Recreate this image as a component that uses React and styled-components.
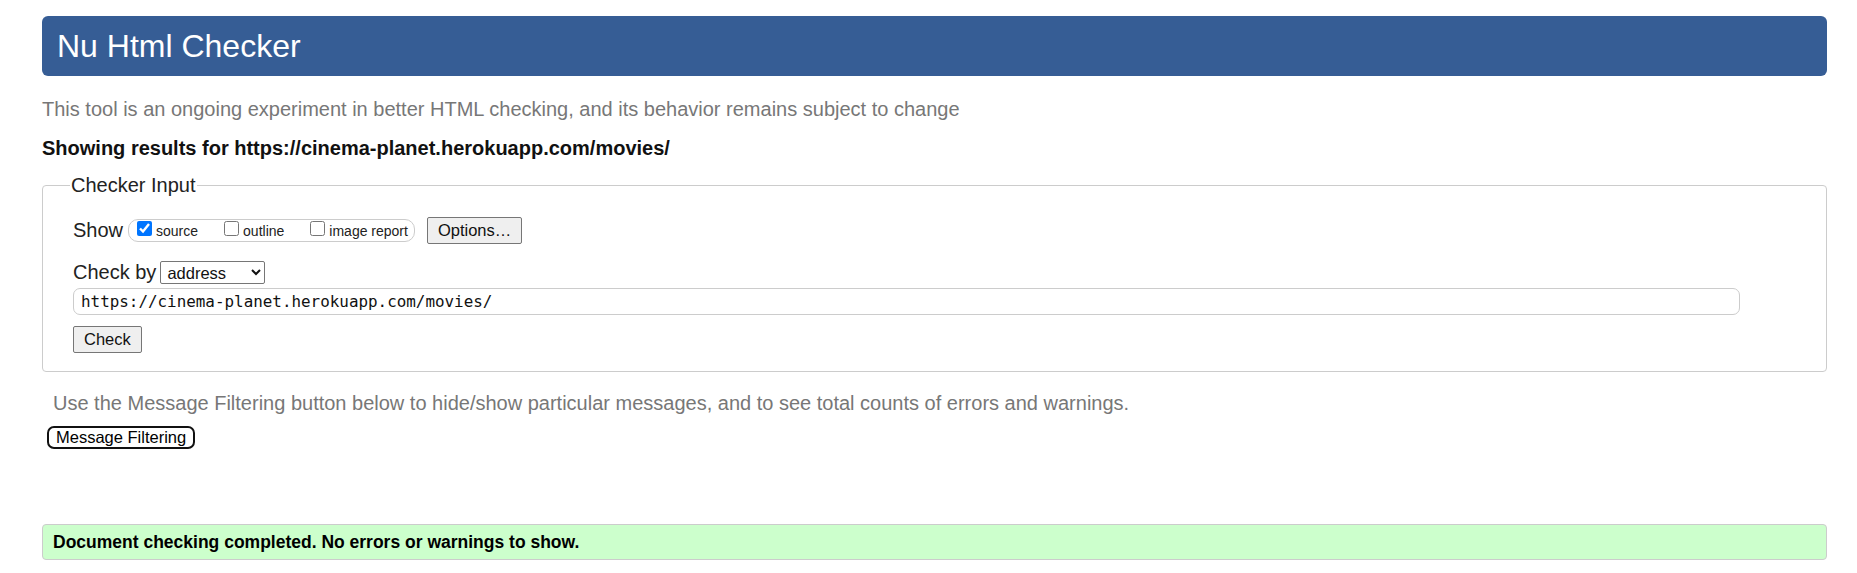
import React from "react";
import styled, { createGlobalStyle } from "styled-components";

const Global = createGlobalStyle`
  html, body { margin: 0; padding: 0; background: #fff; }
  body { font-family: "Liberation Sans", Arial, sans-serif; color: #222; }
`;

const Page = styled.main`
  padding: 16px 30px 12px 42px;
`;

const Title = styled.h1`
  margin: 0;
  height: 60px;
  padding: 0 15px;
  display: flex;
  align-items: center;
  background: #365d95;
  color: #fff;
  border-radius: 6px;
  font-size: 32px;
  font-weight: normal;
`;

const Note = styled.p`
  margin: ${(p) => p.$mt || 0}px 0 0 ${(p) => p.$ml || 0}px;
  font-size: 20px;
  line-height: 23px;
  color: #777;
`;

const Results = styled.p`
  margin: 16px 0 0;
  font-size: 20px;
  line-height: 23px;
  font-weight: bold;
  color: #111;
`;

const Fieldset = styled.fieldset`
  margin: 14px 0 0;
  padding: 20px 30px 18px;
  border: 1px solid #ccc;
  border-radius: 4px;
  min-width: 0;
`;

const Legend = styled.legend`
  padding: 0 1px;
  margin-left: -3px;
  font-size: 20px;
  line-height: 23px;
  color: #222;
`;

const Row = styled.div`
  display: flex;
  align-items: center;
  margin-top: ${(p) => p.$mt || 0}px;
  font-size: 20px;
  line-height: 23px;
`;

const RowLabel = styled.span`
  color: #222;
  margin-right: ${(p) => p.$mr || 4}px;
`;

const Pill = styled.span`
  display: inline-flex;
  align-items: center;
  height: 23px;
  box-sizing: border-box;
  padding: 0 6px 0 8px;
  border: 1px solid #ccc;
  border-radius: 10px;
  gap: 26px;
`;

const Choice = styled.label`
  display: inline-flex;
  align-items: center;
  gap: 4px;
  font-size: 14px;
  line-height: 16px;
  color: #222;
`;

const Box = styled.input`
  width: 15px;
  height: 15px;
  margin: 0 0 4px 0;
  accent-color: #0075ff;
`;

const Button = styled.button`
  font-family: "Liberation Sans", Arial, sans-serif;
  font-size: 16.5px;
  height: 27px;
  padding: 0 10px;
  margin-left: ${(p) => p.$ml || 0}px;
  margin-top: ${(p) => p.$mt || 0}px;
  background: #efefef;
  color: #111;
  border: 1px solid #767676;
  border-radius: 2px;
`;

const FilterButton = styled.button`
  display: block;
  font-family: "Liberation Sans", Arial, sans-serif;
  font-size: 16.5px;
  height: 23px;
  padding: 0 7px;
  margin: 11px 0 0 5px;
  background: #fff;
  color: #000;
  border: 2px solid #111;
  border-radius: 7px;
`;

const Select = styled.select`
  font-family: "Liberation Sans", Arial, sans-serif;
  font-size: 16.5px;
  width: 105px;
  height: 23px;
  padding: 0 2px;
  color: #111;
  background: #fff;
  border: 1px solid #767676;
  border-radius: 2px;
`;

const UrlInput = styled.input`
  display: block;
  box-sizing: border-box;
  width: 1667px;
  height: 27px;
  margin-top: 4px;
  padding: 0 7px;
  border: 1px solid #ccc;
  border-radius: 7px;
  font-family: "DejaVu Sans Mono", "Liberation Mono", monospace;
  font-size: 15.9px;
  color: #111;
  outline: none;
`;

const Success = styled.div`
  margin-top: 75px;
  height: 36px;
  box-sizing: border-box;
  display: flex;
  align-items: center;
  padding: 0 10px;
  background: #ccffcc;
  border: 1px solid #ccc;
  border-radius: 4px;
  font-size: 17.5px;
  font-weight: bold;
  color: #000;
`;

export default function App() {
  return (
    <>
      <Global />
      <Page>
        <Title>Nu Html Checker</Title>
        <Note $mt={22}>
          This tool is an ongoing experiment in better HTML checking, and its
          behavior remains subject to change
        </Note>
        <Results>
          Showing results for https://cinema-planet.herokuapp.com/movies/
        </Results>
        <Fieldset>
          <Legend>Checker Input</Legend>
          <Row>
            <RowLabel $mr={5}>Show</RowLabel>
            <Pill>
              <Choice>
                <Box type="checkbox" defaultChecked />
                source
              </Choice>
              <Choice>
                <Box type="checkbox" />
                outline
              </Choice>
              <Choice>
                <Box type="checkbox" />
                image report
              </Choice>
            </Pill>
            <Button $ml={12}>Options…</Button>
          </Row>
          <Row $mt={17}>
            <RowLabel>Check by</RowLabel>
            <Select defaultValue="address">
              <option value="address">address</option>
              <option value="file">file upload</option>
              <option value="text">text input</option>
            </Select>
          </Row>
          <UrlInput
            type="url"
            defaultValue="https://cinema-planet.herokuapp.com/movies/"
          />
          <Button $mt={11}>Check</Button>
        </Fieldset>
        <Note $mt={20} $ml={11}>
          Use the Message Filtering button below to hide/show particular
          messages, and to see total counts of errors and warnings.
        </Note>
        <FilterButton>Message Filtering</FilterButton>
        <Success>Document checking completed. No errors or warnings to show.</Success>
      </Page>
    </>
  );
}
